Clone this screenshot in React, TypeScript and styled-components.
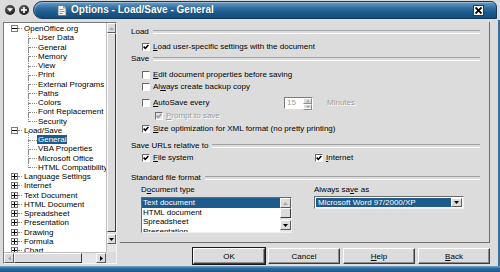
import React from "react";
import styled, { createGlobalStyle, css } from "styled-components";

const GRAY = "#dcdcdc";
const SEL = "#1d5b8c";

const Global = createGlobalStyle`
  html, body { margin: 0; padding: 0; }
  body {
    width: 500px; height: 272px; overflow: hidden; background: ${GRAY};
    font-family: "Liberation Sans", Arial, sans-serif; font-size: 8px; color: #000;
  }
  * { box-sizing: border-box; }
`;

const Window = styled.div`
  width: 500px; height: 272px; display: flex; flex-direction: column; background: ${GRAY};
`;

/* ---------- title bar ---------- */
const TitleBar = styled.div`
  height: 20px; display: flex; padding: 1px 3px 1px 0; background: ${GRAY};
`;
const TitleButtons = styled.div`
  width: 33px; display: flex; align-items: center; gap: 4px; padding-left: 5px;
`;
const RoundBtn = styled.div`
  width: 10px; height: 10px; border-radius: 50%;
  background: radial-gradient(circle at 40% 35%, #6a6a6a, #1e1e1e 70%);
  display: flex; align-items: center; justify-content: center;
`;
const TitleTab = styled.div`
  flex: 1; display: flex; align-items: center; padding: 0 12px 0 23px; gap: 4px;
  background: linear-gradient(#6a9fcb, #2d6c9f 40%, #1a5485 75%, #174c78);
  border: 1px solid #143a5a; border-radius: 9px 6px 0 9px;
  box-shadow: inset 1px 1px 0 rgba(255,255,255,0.35);
`;
const TitleText = styled.div`
  flex: 1; color: #fff; font-weight: bold; font-size: 10px; line-height: 12px;
  text-shadow: 0 0 1px rgba(0,0,0,0.4); white-space: nowrap;
`;
const CloseBtn = styled.div`
  width: 11px; height: 11px; background: #fff; border: 1px solid #1a3d5c;
  display: flex; align-items: center; justify-content: center;
`;

/* ---------- body ---------- */
const Body = styled.div`
  flex: 1; display: flex; gap: 3px; padding: 2px 8px 2px 3px;
  border-right: 2px solid #3a6f9c;
`;

const TreeFrame = styled.div`
  width: 114px; height: 242px; display: grid;
  grid-template-columns: 1fr 10px; grid-template-rows: 1fr 11px;
  border: 1px solid; border-color: #7a7a7a #f4f4f4 #f4f4f4 #7a7a7a;
  background: #fff;
`;
const TreeContent = styled.div`
  overflow: hidden; padding-top: 1px;
`;
const TreeRow = styled.div<{ $level: number; $last?: boolean }>`
  position: relative; height: 9.25px; display: flex; align-items: center; white-space: nowrap;
  padding-left: ${(p) => (p.$level === 0 ? 7 : 33)}px;
  ${(p) =>
    p.$level === 1 &&
    css`
      &::before {
        content: ""; position: absolute; left: 24px; top: -4px;
        height: ${p.$last ? "9px" : "13.25px"}; border-left: 1px dotted #8a8a8a;
      }
      &::after {
        content: ""; position: absolute; left: 25px; top: 4.5px; width: 8px;
        border-top: 1px dotted #8a8a8a;
      }
    `}
`;
const Expander = styled.div`
  width: 7px; height: 7px; border: 1px solid #7a7a7a; background: #fff;
  display: flex; align-items: center; justify-content: center; flex: none;
`;
const Connector = styled.div`
  width: 4px; border-top: 1px dotted #8a8a8a; flex: none;
`;
const TreeLabel = styled.span<{ $selected?: boolean; $top?: boolean }>`
  padding: 0 1px; margin-left: ${(p) => (p.$top ? 1 : 0)}px; line-height: 9px;
  ${(p) => p.$selected && css`background: ${SEL}; color: #fff;`}
`;

const VScroll = styled.div`
  display: flex; flex-direction: column; background: #e6e6e6; border-left: 1px solid #bdbdbd;
`;
const HScroll = styled.div`
  display: flex; background: #e6e6e6; border-top: 1px solid #bdbdbd;
`;
const Corner = styled.div`
  background: ${GRAY};
`;
const SBtn = styled.div<{ $w?: number; $h?: number }>`
  width: ${(p) => (p.$w ? `${p.$w}px` : "auto")}; height: ${(p) => (p.$h ? `${p.$h}px` : "auto")};
  flex: none; background: ${GRAY};
  border: 1px solid; border-color: #fff #5a5a5a #5a5a5a #fff;
  display: flex; align-items: center; justify-content: center;
`;
const Thumb = styled.div<{ $w?: number }>`
  ${(p) => (p.$w ? `width: ${p.$w}px; flex: none;` : "flex: 1;")}
  background: ${GRAY}; border: 1px solid; border-color: #fff #3a3a3a #3a3a3a #fff;
`;
const Track = styled.div<{ $size?: number }>`
  ${(p) => (p.$size ? `flex: none; height: ${p.$size}px;` : "flex: 1;")}
`;

const RightCol = styled.div`
  display: flex; flex-direction: column;
`;
const Panel = styled.div`
  width: 370px; height: 221px; display: flex; flex-direction: column;
  padding: 5px 9px 0 11px;
  border-right: 1px solid #6e6e6e; border-bottom: 1px solid #6e6e6e;
`;
const Header = styled.div<{ $mt?: number }>`
  display: flex; align-items: center; height: 10px; line-height: 10px; margin-top: ${(p) => p.$mt ?? 0}px;
  white-space: nowrap;
  &::after {
    content: ""; flex: 1; margin-left: 4px; height: 2px;
    border-top: 1px solid #a2a2a2; border-bottom: 1px solid #fff;
  }
`;
const Row = styled.div<{ $mt?: number; $h?: number; $indent?: number }>`
  display: flex; align-items: center; white-space: nowrap; line-height: 10px;
  height: ${(p) => p.$h ?? 10}px; margin-top: ${(p) => p.$mt ?? 0}px;
  padding-left: ${(p) => p.$indent ?? 11}px;
`;
const CheckWrap = styled.div<{ $w?: number; $disabled?: boolean }>`
  display: flex; align-items: center; gap: 3px; flex: none;
  ${(p) => p.$w && `width: ${p.$w}px;`}
  color: ${(p) => (p.$disabled ? "#9c9c9c" : "#000")};
  ${(p) => p.$disabled && "text-shadow: 1px 1px 0 #fff;"}
`;
const Box = styled.div<{ $disabled?: boolean }>`
  width: 8px; height: 8px; flex: none;
  border: 1px solid; border-color: #6a6a6a #fff #fff #6a6a6a;
  background: ${(p) => (p.$disabled ? "#e4e4e4" : "#fff")};
  display: flex; align-items: center; justify-content: center;
`;
const U = styled.span`
  text-decoration: underline; text-underline-offset: 1px;
`;
const Spin = styled.div`
  width: 29px; height: 12px; display: flex; background: #fff;
  border: 1px solid; border-color: #7a7a7a #fff #fff #7a7a7a;
`;
const SpinField = styled.div`
  flex: 1; color: #9c9c9c; padding-left: 2px; line-height: 10px;
`;
const SpinBtns = styled.div`
  width: 9px; display: flex; flex-direction: column; background: ${GRAY};
`;
const SpinBtn = styled.div`
  flex: 1; border: 1px solid; border-color: #fff #8a8a8a #8a8a8a #fff;
  display: flex; align-items: center; justify-content: center;
`;
const Disabled = styled.span<{ $ml?: number }>`
  color: #9c9c9c; text-shadow: 1px 1px 0 #fff; margin-left: ${(p) => p.$ml ?? 0}px;
`;
const Cols = styled.div<{ $mt?: number; $h?: number }>`
  display: grid; grid-template-columns: 151px 150px; column-gap: 22px; align-items: start;
  padding-left: 10px; margin-top: ${(p) => p.$mt ?? 0}px; height: ${(p) => p.$h ?? 10}px;
  line-height: 10px; white-space: nowrap;
`;
const ListBox = styled.div`
  height: 36px; display: flex; background: #fff; overflow: hidden;
  border: 1px solid; border-color: #6a6a6a #f0f0f0 #f0f0f0 #6a6a6a;
`;
const ListItems = styled.div`
  flex: 1; overflow: hidden;
`;
const ListItem = styled.div<{ $selected?: boolean }>`
  height: 9.5px; line-height: 9.5px; padding-left: 1px; white-space: nowrap;
  ${(p) => p.$selected && css`background: ${SEL}; color: #fff;`}
`;
const ListScroll = styled.div`
  width: 11px; display: flex; flex-direction: column; background: #e6e6e6;
`;
const Dropdown = styled.div`
  height: 13px; margin-top: -1px; display: flex; background: #fff; padding: 1px;
  border: 1px solid; border-color: #6a6a6a #f0f0f0 #f0f0f0 #6a6a6a;
`;
const DropValue = styled.div`
  flex: 1; background: ${SEL}; color: #fff; line-height: 9px; padding-left: 2px; white-space: nowrap;
`;
const DropBtn = styled.div`
  width: 11px; background: ${GRAY}; border: 1px solid; border-color: #fff #5a5a5a #5a5a5a #fff;
  display: flex; align-items: center; justify-content: center;
`;

const ButtonRow = styled.div`
  display: flex; justify-content: flex-end; gap: 3px; margin-top: 5px;
`;
const Button = styled.div<{ $default?: boolean }>`
  width: 72px; height: 16px; display: flex; align-items: center; justify-content: center;
  background: ${GRAY}; border: 1px solid; border-color: #fff #3c3c3c #3c3c3c #fff;
  box-shadow: inset -1px -1px 0 #8e8e8e;
  ${(p) => p.$default && css`outline: 1px solid #1a1a1a; outline-offset: 0;`}
`;

const BottomStrip = styled.div`
  height: 6px; background: linear-gradient(#7aa7cd, #2d6b9e 40%, #1d5586);
`;

/* ---------- icons ---------- */
const Tri = ({ dir, color = "#000", size = 5 }: { dir: "up" | "down" | "left" | "right"; color?: string; size?: number }) => {
  const pts = {
    up: "0,4 5,4 2.5,1",
    down: "0,1 5,1 2.5,4",
    left: "4,0 4,5 1,2.5",
    right: "1,0 1,5 4,2.5",
  }[dir];
  return (
    <svg width={size} height={size} viewBox="0 0 5 5">
      <polygon points={pts} fill={color} />
    </svg>
  );
};

const CheckMark = ({ color = "#000" }: { color?: string }) => (
  <svg width="6" height="6" viewBox="0 0 6 6">
    <path d="M0.6 2.6 L2.3 4.3 L5.4 1.0" stroke={color} strokeWidth="1.5" fill="none" />
  </svg>
);

const Check = ({ checked, disabled }: { checked?: boolean; disabled?: boolean }) => (
  <Box $disabled={disabled}>{checked && <CheckMark color={disabled ? "#9a9a9a" : "#000"} />}</Box>
);

const ExpGlyph = ({ plus }: { plus?: boolean }) => (
  <svg width="5" height="5" viewBox="0 0 5 5">
    <path d={plus ? "M0 2.5 H5 M2.5 0 V5" : "M0 2.5 H5"} stroke="#000" strokeWidth="1" />
  </svg>
);

const TitleIcon = () => (
  <svg width="10" height="11" viewBox="0 0 10 11">
    <path d="M1 0.5 H6.5 L9 3 V10.5 H1 Z" fill="#f2f2f2" stroke="#6c6c6c" strokeWidth="0.8" />
    <path d="M6.5 0.5 V3 H9" fill="#c8c8c8" stroke="#6c6c6c" strokeWidth="0.6" />
    <rect x="2.5" y="4" width="4" height="1" fill="#8aa4c4" />
    <rect x="2.5" y="6" width="5" height="1" fill="#8aa4c4" />
    <rect x="2.5" y="8" width="3" height="1" fill="#c07a60" />
  </svg>
);

/* ---------- data ---------- */
type Node = { label: string; level: 0 | 1; exp?: "plus" | "minus"; last?: boolean; selected?: boolean };
const tree: Node[] = [
  { label: "OpenOffice.org", level: 0, exp: "minus" },
  { label: "User Data", level: 1 },
  { label: "General", level: 1 },
  { label: "Memory", level: 1 },
  { label: "View", level: 1 },
  { label: "Print", level: 1 },
  { label: "External Programs", level: 1 },
  { label: "Paths", level: 1 },
  { label: "Colors", level: 1 },
  { label: "Font Replacement", level: 1 },
  { label: "Security", level: 1, last: true },
  { label: "Load/Save", level: 0, exp: "minus" },
  { label: "General", level: 1, selected: true },
  { label: "VBA Properties", level: 1 },
  { label: "Microsoft Office", level: 1 },
  { label: "HTML Compatibility", level: 1, last: true },
  { label: "Language Settings", level: 0, exp: "plus" },
  { label: "Internet", level: 0, exp: "plus" },
  { label: "Text Document", level: 0, exp: "plus" },
  { label: "HTML Document", level: 0, exp: "plus" },
  { label: "Spreadsheet", level: 0, exp: "plus" },
  { label: "Presentation", level: 0, exp: "plus" },
  { label: "Drawing", level: 0, exp: "plus" },
  { label: "Formula", level: 0, exp: "plus" },
  { label: "Chart", level: 0, exp: "plus" },
  { label: "Data Sources", level: 0, exp: "plus" },
];

export default function App() {
  return (
    <Window>
      <Global />
      <TitleBar>
        <TitleButtons>
          <RoundBtn>
            <Tri dir="down" color="#fff" size={6} />
          </RoundBtn>
          <RoundBtn>
            <svg width="6" height="6" viewBox="0 0 6 6">
              <path d="M0 3 H6 M3 0 V6" stroke="#fff" strokeWidth="1.6" />
            </svg>
          </RoundBtn>
        </TitleButtons>
        <TitleTab>
          <TitleIcon />
          <TitleText>Options - Load/Save - General</TitleText>
          <CloseBtn>
            <svg width="7" height="7" viewBox="0 0 7 7">
              <path d="M0.5 0.5 L6.5 6.5 M6.5 0.5 L0.5 6.5" stroke="#000" strokeWidth="1.8" />
            </svg>
          </CloseBtn>
        </TitleTab>
      </TitleBar>

      <Body>
        <TreeFrame>
          <TreeContent>
            {tree.map((n, i) => (
              <TreeRow key={i} $level={n.level} $last={n.last}>
                {n.level === 0 && (
                  <>
                    <Expander>
                      <ExpGlyph plus={n.exp === "plus"} />
                    </Expander>
                    <Connector />
                  </>
                )}
                <TreeLabel $selected={n.selected} $top={n.level === 0}>
                  {n.label}
                </TreeLabel>
              </TreeRow>
            ))}
          </TreeContent>
          <VScroll>
            <SBtn $h={10}>
              <Tri dir="up" color="#a8a8a8" />
            </SBtn>
            <Thumb />
            <Track $size={2} />
            <SBtn $h={10}>
              <Tri dir="down" />
            </SBtn>
            <Track $size={8} />
          </VScroll>
          <HScroll>
            <SBtn $w={10}>
              <Tri dir="left" color="#a8a8a8" />
            </SBtn>
            <Thumb $w={68} />
            <Track />
            <SBtn $w={10}>
              <Tri dir="right" />
            </SBtn>
          </HScroll>
          <Corner />
        </TreeFrame>

        <RightCol>
          <Panel>
            <Header>Load</Header>
            <Row $mt={5}>
              <CheckWrap>
                <Check checked />
                <span>
                  <U>L</U>oad user-specific settings with the document
                </span>
              </CheckWrap>
            </Row>

            <Header $mt={2}>Save</Header>
            <Row $mt={6}>
              <CheckWrap>
                <Check />
                <span>
                  <U>E</U>dit document properties before saving
                </span>
              </CheckWrap>
            </Row>
            <Row $mt={2}>
              <CheckWrap>
                <Check />
                <span>
                  Al<U>w</U>ays create backup copy
                </span>
              </CheckWrap>
            </Row>
            <Row $mt={5} $h={12}>
              <CheckWrap $w={142}>
                <Check />
                <span>
                  <U>A</U>utoSave every
                </span>
              </CheckWrap>
              <Spin>
                <SpinField>15</SpinField>
                <SpinBtns>
                  <SpinBtn>
                    <Tri dir="up" color="#a8a8a8" size={4} />
                  </SpinBtn>
                  <SpinBtn>
                    <Tri dir="down" color="#a8a8a8" size={4} />
                  </SpinBtn>
                </SpinBtns>
              </Spin>
              <Disabled $ml={14}>Minutes</Disabled>
            </Row>
            <Row $mt={2} $indent={24}>
              <CheckWrap $disabled>
                <Check checked disabled />
                <span>
                  <U>P</U>rompt to save
                </span>
              </CheckWrap>
            </Row>
            <Row $mt={3}>
              <CheckWrap>
                <Check checked />
                <span>
                  <U>S</U>ize optimization for XML format (no pretty printing)
                </span>
              </CheckWrap>
            </Row>

            <Header $mt={7}>Save URLs relative to</Header>
            <Row $mt={2}>
              <CheckWrap $w={173}>
                <Check checked />
                <span>
                  <U>F</U>ile system
                </span>
              </CheckWrap>
              <CheckWrap>
                <Check checked />
                <span>
                  <U>I</U>nternet
                </span>
              </CheckWrap>
            </Row>

            <Header $mt={10}>Standard file format</Header>
            <Cols $mt={2}>
              <span>
                D<U>o</U>cument type
              </span>
              <span>
                Always sa<U>v</U>e as
              </span>
            </Cols>
            <Cols $mt={2} $h={36}>
              <ListBox>
                <ListItems>
                  <ListItem $selected>Text document</ListItem>
                  <ListItem>HTML document</ListItem>
                  <ListItem>Spreadsheet</ListItem>
                  <ListItem>Presentation</ListItem>
                </ListItems>
                <ListScroll>
                  <SBtn $h={10}>
                    <Tri dir="up" color="#a8a8a8" />
                  </SBtn>
                  <Thumb />
                  <Track $size={2} />
                  <SBtn $h={10}>
                    <Tri dir="down" />
                  </SBtn>
                  <Track $size={2} />
                </ListScroll>
              </ListBox>
              <Dropdown>
                <DropValue>Microsoft Word 97/2000/XP</DropValue>
                <DropBtn>
                  <Tri dir="down" />
                </DropBtn>
              </Dropdown>
            </Cols>
          </Panel>
          <ButtonRow>
            <Button $default>OK</Button>
            <Button>Cancel</Button>
            <Button>
              <span>
                <U>H</U>elp
              </span>
            </Button>
            <Button>
              <span>
                <U>B</U>ack
              </span>
            </Button>
          </ButtonRow>
        </RightCol>
      </Body>
      <BottomStrip />
    </Window>
  );
}
